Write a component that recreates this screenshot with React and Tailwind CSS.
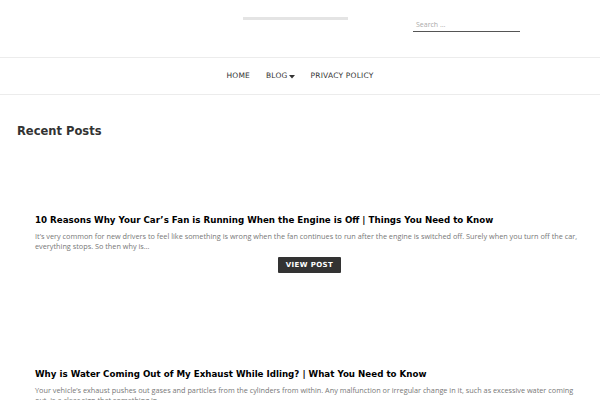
const posts = [
  {
    title:
      "10 Reasons Why Your Car\u2019s Fan is Running When the Engine is Off | Things You Need to Know",
    excerpt:
      "It\u2019s very common for new drivers to feel like something is wrong when the fan continues to run after the engine is switched off. Surely when you turn off the car, everything stops. So then why is\u2026",
  },
  {
    title:
      "Why is Water Coming Out of My Exhaust While Idling? | What You Need to Know",
    excerpt:
      "Your vehicle\u2019s exhaust pushes out gases and particles from the cylinders from within. Any malfunction or irregular change in it, such as excessive water coming out, is a clear sign that something in\u2026",
  },
];

const App = () => {
  return (
    <div className="w-[600px] h-[400px] overflow-hidden bg-white font-['DejaVu_Sans',sans-serif]">
      <header className="h-[57px] flex">
        <div className="w-[243px]" />
        <div className="pt-[17px]">
          <div className="w-[105px] h-[3px] bg-[#e4e4e4]" />
        </div>
        <div className="w-[65px]" />
        <div className="pt-[18px]">
          <div className="w-[107px] h-[14px] border-b border-[#555] pl-[3px] text-[7px] leading-[13px] text-[#aaa] font-['Open_Sans',sans-serif]">
            Search …
          </div>
        </div>
      </header>

      <nav className="h-[38px] border-y border-[#ececec] flex items-center justify-center gap-[16px] text-[7.5px] text-[#333] tracking-[0.2px]">
        <span>HOME</span>
        <span className="flex items-center gap-[1px]">
          BLOG
          <svg width="6" height="5" viewBox="0 0 6 5">
            <path d="M0 1h6L3 4.5z" fill="#333" />
          </svg>
        </span>
        <span>PRIVACY POLICY</span>
      </nav>

      <main className="pl-[17px]">
        <h2 className="mt-[29px] text-[11.5px] font-bold text-[#333] leading-[14px]">
          Recent Posts
        </h2>
        {posts.map((p, i) => (
          <article
            key={i}
            className={`pl-[18px] w-[567px] ${i === 0 ? "mt-[76px]" : "mt-[95px]"}`}
          >
            <h3 className="text-[8.7px] font-bold text-black leading-[12px]">
              {p.title}
            </h3>
            <p className="mt-[5px] text-[7.3px] leading-[10px] text-[#777] font-['Open_Sans',sans-serif]">
              {p.excerpt}
            </p>
            {i === 0 && (
              <div className="flex justify-center mt-[6px]">
                <span className="bg-[#333] text-white text-[7px] font-bold tracking-[0.4px] h-[16px] px-[8px] flex items-center rounded-[1px]">
                  VIEW POST
                </span>
              </div>
            )}
          </article>
        ))}
      </main>
    </div>
  );
};

export default App;
